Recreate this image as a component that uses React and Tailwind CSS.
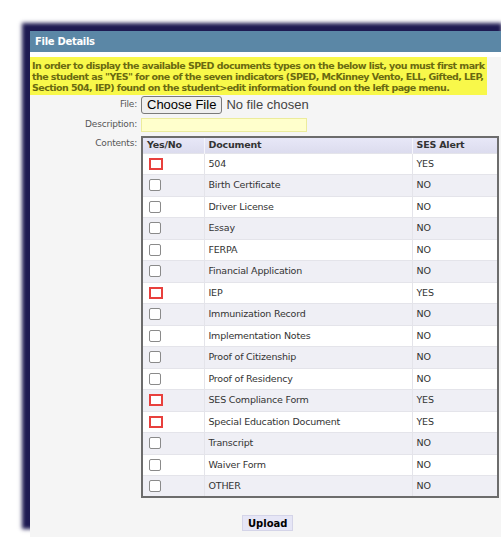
const docs = [
  { name: '504', alert: 'YES', flagged: true },
  { name: 'Birth Certificate', alert: 'NO' },
  { name: 'Driver License', alert: 'NO' },
  { name: 'Essay', alert: 'NO' },
  { name: 'FERPA', alert: 'NO' },
  { name: 'Financial Application', alert: 'NO' },
  { name: 'IEP', alert: 'YES', flagged: true },
  { name: 'Immunization Record', alert: 'NO' },
  { name: 'Implementation Notes', alert: 'NO' },
  { name: 'Proof of Citizenship', alert: 'NO' },
  { name: 'Proof of Residency', alert: 'NO' },
  { name: 'SES Compliance Form', alert: 'YES', flagged: true },
  { name: 'Special Education Document', alert: 'YES', flagged: true },
  { name: 'Transcript', alert: 'NO' },
  { name: 'Waiver Form', alert: 'NO' },
  { name: 'OTHER', alert: 'NO' },
];

function Box({ flagged }) {
  if (flagged) {
    return <span className="block w-[14px] h-[12px] border-2 border-[#e8403d] bg-white" />;
  }
  return <span className="block w-[12px] h-[12px] rounded-[2px] border border-[#8a8a8a] bg-white" />;
}

export default function App() {
  return (
    <div
      className="w-[501px] h-[537px] overflow-hidden bg-white pl-[30px] pt-[31px]"
      style={{ fontFamily: '"DejaVu Sans", sans-serif' }}
    >
      <div className="w-[480px] h-[506px] bg-[#f5f5f5] shadow-[-8px_-8px_4px_#1e1a52]">
        <div className="h-[21px] bg-[#5b87a6] flex items-center pl-[5px] text-white font-bold text-[10px] tracking-[-0.3px]">
          File Details
        </div>
        <div className="h-[5px] bg-white" />
        <div className="w-[457px] bg-[#f8f84a] px-[2px] pt-[3px] pb-[2px] text-[9.5px] leading-[11px] font-bold text-[#6a6a10] tracking-[-0.55px] whitespace-nowrap overflow-hidden">
          In order to display the available SPED documents types on the below list, you must first mark
          <br />
          the student as "YES" for one of the seven indicators (SPED, McKinney Vento, ELL, Gifted, LEP,
          <br />
          Section 504, IEP) found on the student&gt;edit information found on the left page menu.
        </div>

        <div className="flex items-center mt-[1px] h-[18px]">
          <div className="w-[111px] text-right pr-[4px] text-[9px] text-[#555] tracking-[-0.2px]">File:</div>
          <div
            className="h-[18px] px-[5px] flex items-center border border-[#7a7a7a] rounded-[3px] bg-[#efefef] text-[13px] text-black"
            style={{ fontFamily: '"Liberation Sans", Arial, sans-serif' }}
          >
            Choose File
          </div>
          <div className="ml-[4px] text-[13px] text-[#444]" style={{ fontFamily: '"Liberation Sans", Arial, sans-serif' }}>
            No file chosen
          </div>
        </div>

        <div className="flex items-center mt-[4px] h-[14px]">
          <div className="w-[111px] text-right pr-[4px] text-[9px] text-[#555] tracking-[-0.2px]">Description:</div>
          <div className="w-[166px] h-[14px] bg-[#ffffcc] border border-[#ecec9c]" />
        </div>

        <div className="flex items-start mt-[4px]">
          <div className="w-[111px] text-right pr-[4px] text-[9px] text-[#555] tracking-[-0.2px] pt-[1px]">Contents:</div>
          <table className="w-[358px] border-2 border-[#6c6c6c] border-collapse text-[9.5px] text-[#333] tracking-[-0.2px]">
            <thead>
              <tr className="h-[16px] bg-[linear-gradient(#e8e8f8,#dcdcee)] text-left">
                <th className="w-[62px] pl-[4px] font-bold border-r border-[#f4f4fa]">Yes/No</th>
                <th className="w-[208px] pl-[4px] font-bold border-r border-[#f4f4fa]">Document</th>
                <th className="pl-[4px] font-bold">SES Alert</th>
              </tr>
            </thead>
            <tbody>
              {docs.map((d, i) => (
                <tr key={d.name} className={`h-[21.5px] border-t border-[#e4e4ea] ${i % 2 ? 'bg-[#efeff5]' : 'bg-white'}`}>
                  <td className="pl-[6px] border-r border-[#e4e4ea]">
                    <Box flagged={d.flagged} />
                  </td>
                  <td className="pl-[4px] border-r border-[#e4e4ea]">{d.name}</td>
                  <td className="pl-[4px]">{d.alert}</td>
                </tr>
              ))}
            </tbody>
          </table>
        </div>

        <div className="flex mt-[17px] pl-[212px]">
          <div className="h-[16px] px-[5px] flex items-center bg-[#e6e6f6] border border-[#d4d4e8] text-[10px] font-bold text-black">
            Upload
          </div>
        </div>
      </div>
    </div>
  );
}
